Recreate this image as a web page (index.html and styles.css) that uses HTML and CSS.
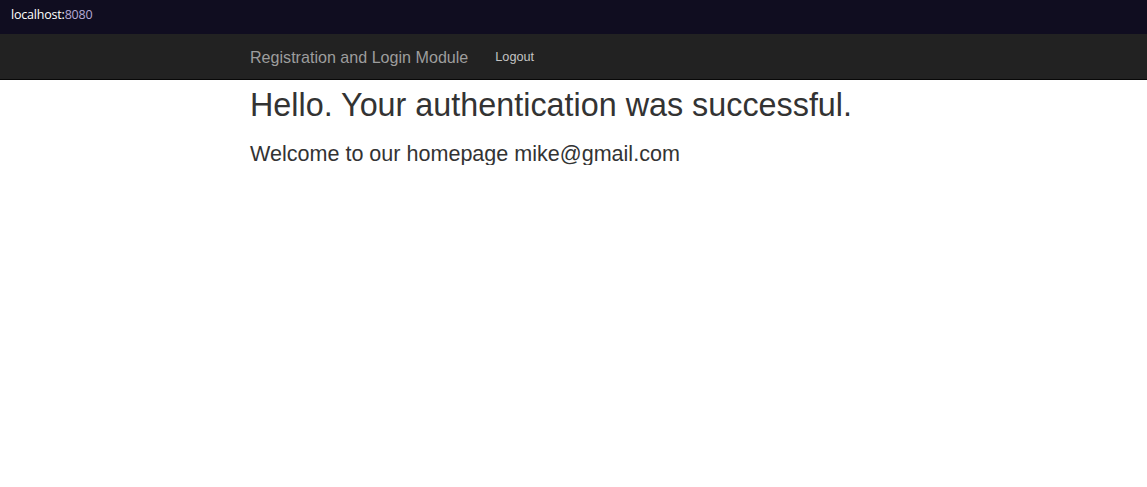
FILE: index.html
```html
<!DOCTYPE html>
<html>
<head>
<meta charset="utf-8">
<link rel="stylesheet" href="styles.css">
</head>
<body>
<div class="urlbar"><span class="host">localhost:</span><span class="port">8080</span></div>
<nav class="navbar">
  <div class="container nav-inner">
    <a class="brand">Registration and Login Module</a>
    <a class="nav-link">Logout</a>
  </div>
</nav>
<main class="container">
  <h1 class="title">Hello. Your authentication was successful.</h1>
  <h3 class="welcome">Welcome to our homepage mike@gmail.com</h3>
</main>
</body>
</html>
```
FILE: styles.css
```css
html, body { margin: 0; padding: 0; background: #fff; }
body { font-family: "Liberation Sans", Arial, sans-serif; color: #333; }
.urlbar {
  height: 34px;
  background: #100d20;
  box-sizing: border-box;
  padding: 6px 0 0 11px;
  font-family: "Open Sans", "Noto Sans", sans-serif;
  font-size: 12.5px;
  letter-spacing: -0.2px;
}
.host { color: #ffffff; }
.port { color: #b6a9d6; }
.navbar {
  height: 46px;
  background: #222;
  border-bottom: 1px solid #080808;
  box-sizing: border-box;
}
.container { padding-left: 250px; }
.nav-inner { display: flex; align-items: center; height: 100%; padding-top: 1px; box-sizing: border-box; }
.brand { font-size: 16.1px; color: #9d9d9d; }
.nav-link { font-size: 12.7px; color: #c4c4c4; margin-left: 27px; }
.title { margin: 8px 0 0; font-size: 32.35px; font-weight: 400; line-height: 1.1; }
.welcome { margin: 18px 0 0; font-size: 21.55px; font-weight: 400; line-height: 1.1; }
```
